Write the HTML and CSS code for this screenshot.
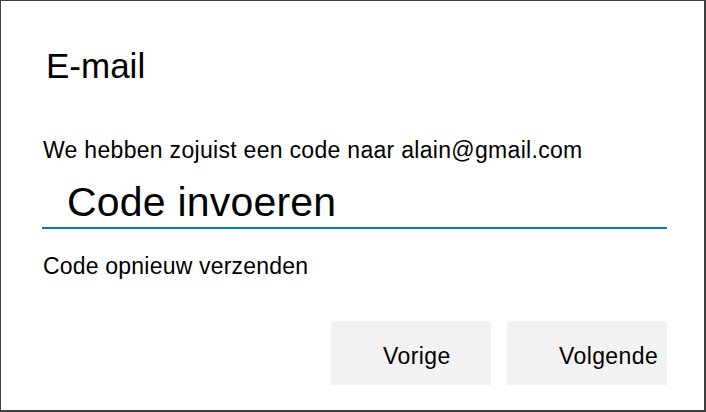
FILE: index.html
```html
<!DOCTYPE html>
<html lang="nl">
<head>
<meta charset="utf-8">
<title>E-mail</title>
<link rel="stylesheet" href="styles.css">
</head>
<body>
<div class="dialog">
  <h1 class="title">E-mail</h1>
  <p class="desc">We hebben zojuist een code naar alain@gmail.com</p>
  <input class="code" type="text" placeholder="Code invoeren">
  <a class="resend" href="#">Code opnieuw verzenden</a>
  <div class="actions">
    <button class="btn" type="button">Vorige</button>
    <button class="btn" type="button">Volgende</button>
  </div>
</div>
</body>
</html>
```

FILE: styles.css
```css
html, body {
  margin: 0;
  padding: 0;
  background: #ffffff;
}

.dialog {
  box-sizing: border-box;
  width: 706px;
  height: 412px;
  border-style: solid;
  border-color: #404040;
  border-width: 1px 2px 2px 1px;
  padding: 45px 37px 0 42px;
  display: flex;
  flex-direction: column;
  align-items: flex-start;
  font-family: "Liberation Sans", Arial, sans-serif;
  color: #000000;
}

.title {
  margin: 0 0 0 3px;
  font-size: 35px;
  font-weight: normal;
  line-height: 40px;
}

.desc {
  margin: 51px 0 0 0;
  font-size: 23px;
  line-height: 26px;
  letter-spacing: 0.3px;
}

.code {
  box-sizing: border-box;
  margin: 16px 0 0 -1px;
  width: 625px;
  height: 50px;
  padding: 0 0 2px 25px;
  border: none;
  border-bottom: 2px solid #0078d4;
  outline: none;
  background: transparent;
  font-family: "Liberation Sans", Arial, sans-serif;
  font-size: 41px;
  line-height: 46px;
  letter-spacing: 0.2px;
  color: #000000;
}

.code::placeholder {
  color: #000000;
  opacity: 1;
}

.resend {
  margin-top: 24px;
  font-size: 23px;
  line-height: 26px;
  letter-spacing: 0.2px;
  color: #000000;
  text-decoration: none;
}

.actions {
  align-self: stretch;
  margin-top: 42px;
  display: flex;
  justify-content: flex-end;
  gap: 16px;
}

.btn {
  box-sizing: border-box;
  width: 160px;
  height: 64px;
  padding: 22px 0 0 52px;
  border: none;
  background: #f2f2f2;
  text-align: left;
  display: flex;
  align-items: flex-start;
  font-family: "Liberation Sans", Arial, sans-serif;
  font-size: 23px;
  line-height: 26px;
  letter-spacing: 0.4px;
  color: #000000;
}
```
